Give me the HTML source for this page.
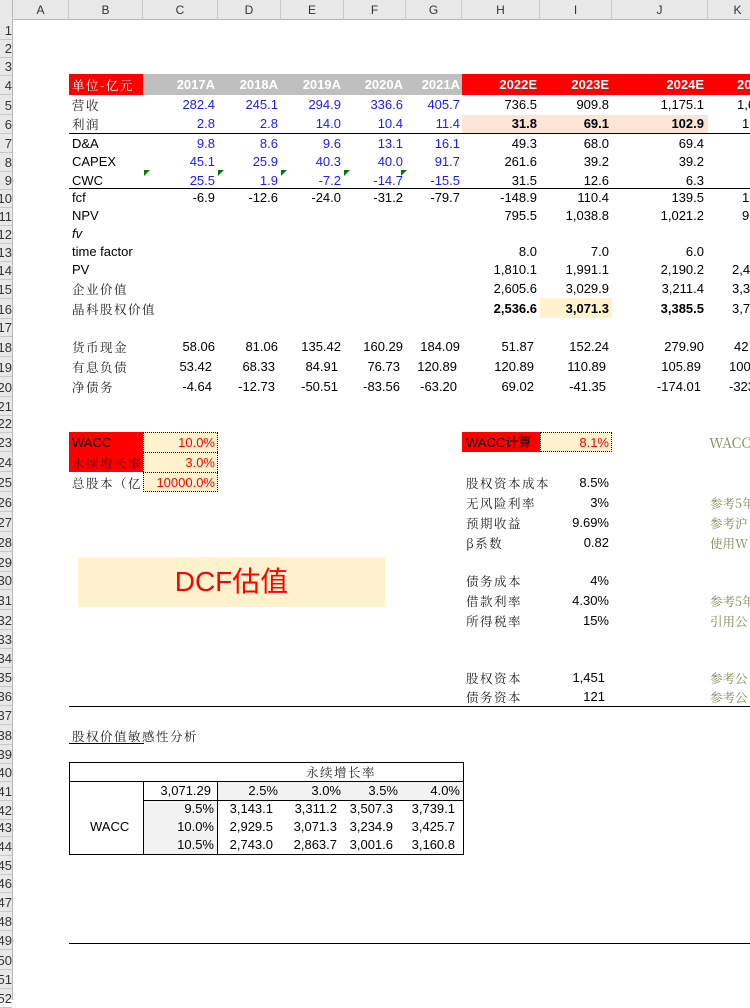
<!DOCTYPE html>
<html><head><meta charset="utf-8"><style>
body{margin:0;width:750px;height:1000px;overflow:hidden;background:#fff;position:relative;font-family:"Liberation Sans","Noto Sans CJK SC",sans-serif;font-size:13px;color:#000}
div{position:absolute;box-sizing:border-box}
.t{height:18px;line-height:18px;white-space:nowrap}
.k{font-family:"Noto Serif CJK SC","Liberation Serif",serif;font-size:12.5px;letter-spacing:1.5px;color:#222}
.b{color:#1a1aff}
.w{color:#fff;font-weight:bold}
.g{color:#7b8a55;font-family:"Noto Serif CJK SC","Liberation Serif",serif;font-size:12.5px}
.red{color:#ff0000}
.ch{top:0;height:20px;line-height:20px;text-align:center;color:#333;font-size:12px;border-right:1px solid #c8c8c8}
.rh{left:0;width:12px;height:19px;font-size:13px;line-height:19px;overflow:hidden;color:#333;border-bottom:1px solid #c8c8c8}
.rh span{position:absolute;right:0;top:0}
.tri{width:0;height:0;border-top:6px solid #007a00;border-right:6px solid transparent}
</style></head><body>
<div style="left:0;top:0;width:750px;height:20px;background:#e8e8e8;border-bottom:1px solid #b8b8b8"></div>
<div style="left:0;top:0;width:13px;height:1000px;background:#e8e8e8;border-right:1px solid #b8b8b8"></div>
<div class="ch" style="left:13px;width:56px">A</div>
<div class="ch" style="left:69px;width:74px">B</div>
<div class="ch" style="left:143px;width:75px">C</div>
<div class="ch" style="left:218px;width:63px">D</div>
<div class="ch" style="left:281px;width:63px">E</div>
<div class="ch" style="left:344px;width:62px">F</div>
<div class="ch" style="left:406px;width:56px">G</div>
<div class="ch" style="left:462px;width:78px">H</div>
<div class="ch" style="left:540px;width:72px">I</div>
<div class="ch" style="left:612px;width:96px">J</div>
<div class="ch" style="left:708px;width:60px">K</div>
<div class="rh" style="top:21px"><span>1</span></div><div class="rh" style="top:39px"><span>2</span></div><div class="rh" style="top:57px"><span>3</span></div><div class="rh" style="top:76px"><span>4</span></div>
<div class="rh" style="top:96px"><span>5</span></div><div class="rh" style="top:115px"><span>6</span></div><div class="rh" style="top:134px"><span>7</span></div><div class="rh" style="top:153px"><span>8</span></div>
<div class="rh" style="top:171px"><span>9</span></div><div class="rh" style="top:189px"><span>10</span></div><div class="rh" style="top:207px"><span>11</span></div><div class="rh" style="top:225px"><span>12</span></div>
<div class="rh" style="top:243px"><span>13</span></div><div class="rh" style="top:261px"><span>14</span></div><div class="rh" style="top:280px"><span>15</span></div><div class="rh" style="top:300px"><span>16</span></div>
<div class="rh" style="top:318px"><span>17</span></div><div class="rh" style="top:338px"><span>18</span></div><div class="rh" style="top:358px"><span>19</span></div><div class="rh" style="top:378px"><span>20</span></div>
<div class="rh" style="top:397px"><span>21</span></div><div class="rh" style="top:414px"><span>22</span></div><div class="rh" style="top:433px"><span>23</span></div><div class="rh" style="top:453px"><span>24</span></div>
<div class="rh" style="top:473px"><span>25</span></div><div class="rh" style="top:493px"><span>26</span></div><div class="rh" style="top:513px"><span>27</span></div><div class="rh" style="top:533px"><span>28</span></div>
<div class="rh" style="top:553px"><span>29</span></div><div class="rh" style="top:571px"><span>30</span></div><div class="rh" style="top:591px"><span>31</span></div><div class="rh" style="top:611px"><span>32</span></div>
<div class="rh" style="top:630px"><span>33</span></div><div class="rh" style="top:649px"><span>34</span></div><div class="rh" style="top:668px"><span>35</span></div><div class="rh" style="top:687px"><span>36</span></div>
<div class="rh" style="top:706px"><span>37</span></div><div class="rh" style="top:726px"><span>38</span></div><div class="rh" style="top:745px"><span>39</span></div><div class="rh" style="top:763px"><span>40</span></div>
<div class="rh" style="top:782px"><span>41</span></div><div class="rh" style="top:801px"><span>42</span></div><div class="rh" style="top:818px"><span>43</span></div><div class="rh" style="top:837px"><span>44</span></div>
<div class="rh" style="top:856px"><span>45</span></div><div class="rh" style="top:874px"><span>46</span></div><div class="rh" style="top:893px"><span>47</span></div><div class="rh" style="top:912px"><span>48</span></div>
<div class="rh" style="top:931px"><span>49</span></div><div class="rh" style="top:951px"><span>50</span></div><div class="rh" style="top:970px"><span>51</span></div><div class="rh" style="top:989px"><span>52</span></div>

<div style="left:69px;top:74px;width:74px;height:21px;background:#ff0000"></div>
<div style="left:143px;top:74px;width:319px;height:21px;background:#bfbfbf"></div>
<div style="left:462px;top:74px;width:288px;height:21px;background:#ff0000"></div>
<div class="t k" style="left:72px;top:76px;color:#fff">单位-亿元</div>
<div class="t w" style="right:535px;top:76px">2017A</div>
<div class="t w" style="right:472px;top:76px">2018A</div>
<div class="t w" style="right:409px;top:76px">2019A</div>
<div class="t w" style="right:347px;top:76px">2020A</div>
<div class="t w" style="right:290px;top:76px">2021A</div>
<div class="t w" style="right:213px;top:76px">2022E</div>
<div class="t w" style="right:141px;top:76px">2023E</div>
<div class="t w" style="right:46px;top:76px">2024E</div>
<div class="t w" style="left:737px;top:76px">2025E</div>

<div style="left:462px;top:115px;width:246px;height:19px;background:#fce4d6"></div>
<div style="left:540px;top:298px;width:72px;height:20px;background:#fff2cc"></div>
<div style="left:69px;top:133px;width:681px;height:1px;background:#000"></div>
<div style="left:69px;top:188px;width:681px;height:1px;background:#000"></div>

<div class="t k" style="left:72px;top:96px">营收</div>
<div class="t k" style="left:72px;top:115px">利润</div>
<div class="t" style="left:72px;top:135px">D&amp;A</div>
<div class="t" style="left:72px;top:153px">CAPEX</div>
<div class="t" style="left:72px;top:172px">CWC</div>
<div class="t" style="left:72px;top:189px">fcf</div>
<div class="t" style="left:72px;top:207px">NPV</div>
<div class="t" style="left:72px;top:225px;font-style:italic">fv</div>
<div class="t" style="left:72px;top:243px">time factor</div>
<div class="t" style="left:72px;top:261px">PV</div>
<div class="t k" style="left:72px;top:280px">企业价值</div>
<div class="t k" style="left:72px;top:300px">晶科股权价值</div>
<div class="t k" style="left:72px;top:338px">货币现金</div>
<div class="t k" style="left:72px;top:358px">有息负债</div>
<div class="t k" style="left:72px;top:378px">净债务</div>

<div class="tri" style="left:144px;top:170px"></div><div class="tri" style="left:218px;top:170px"></div><div class="tri" style="left:281px;top:170px"></div><div class="tri" style="left:344px;top:170px"></div><div class="tri" style="left:401px;top:170px"></div>

<div class="t b" style="right:535px;top:96px">282.4</div><div class="t b" style="right:472px;top:96px">245.1</div><div class="t b" style="right:409px;top:96px">294.9</div><div class="t b" style="right:347px;top:96px">336.6</div><div class="t b" style="right:290px;top:96px">405.7</div>
<div class="t b" style="right:535px;top:115px">2.8</div><div class="t b" style="right:472px;top:115px">2.8</div><div class="t b" style="right:409px;top:115px">14.0</div><div class="t b" style="right:347px;top:115px">10.4</div><div class="t b" style="right:290px;top:115px">11.4</div>
<div class="t b" style="right:535px;top:135px">9.8</div><div class="t b" style="right:472px;top:135px">8.6</div><div class="t b" style="right:409px;top:135px">9.6</div><div class="t b" style="right:347px;top:135px">13.1</div><div class="t b" style="right:290px;top:135px">16.1</div>
<div class="t b" style="right:535px;top:153px">45.1</div><div class="t b" style="right:472px;top:153px">25.9</div><div class="t b" style="right:409px;top:153px">40.3</div><div class="t b" style="right:347px;top:153px">40.0</div><div class="t b" style="right:290px;top:153px">91.7</div>
<div class="t b" style="right:535px;top:172px">25.5</div><div class="t b" style="right:472px;top:172px">1.9</div><div class="t b" style="right:409px;top:172px">-7.2</div><div class="t b" style="right:347px;top:172px">-14.7</div><div class="t b" style="right:290px;top:172px">-15.5</div>
<div class="t" style="right:535px;top:189px">-6.9</div><div class="t" style="right:472px;top:189px">-12.6</div><div class="t" style="right:409px;top:189px">-24.0</div><div class="t" style="right:347px;top:189px">-31.2</div><div class="t" style="right:290px;top:189px">-79.7</div>

<div class="t" style="right:213px;top:96px">736.5</div><div class="t" style="right:141px;top:96px">909.8</div><div class="t" style="right:46px;top:96px">1,175.1</div><div class="t" style="left:737px;top:96px">1,6</div>
<div class="t" style="right:213px;top:115px;font-weight:bold">31.8</div><div class="t" style="right:141px;top:115px;font-weight:bold">69.1</div><div class="t" style="right:46px;top:115px;font-weight:bold">102.9</div><div class="t" style="left:742px;top:115px">1</div>
<div class="t" style="right:213px;top:135px">49.3</div><div class="t" style="right:141px;top:135px">68.0</div><div class="t" style="right:46px;top:135px">69.4</div>
<div class="t" style="right:213px;top:153px">261.6</div><div class="t" style="right:141px;top:153px">39.2</div><div class="t" style="right:46px;top:153px">39.2</div>
<div class="t" style="right:213px;top:172px">31.5</div><div class="t" style="right:141px;top:172px">12.6</div><div class="t" style="right:46px;top:172px">6.3</div>
<div class="t" style="right:213px;top:189px">-148.9</div><div class="t" style="right:141px;top:189px">110.4</div><div class="t" style="right:46px;top:189px">139.5</div><div class="t" style="left:742px;top:189px">1</div>
<div class="t" style="right:213px;top:207px">795.5</div><div class="t" style="right:141px;top:207px">1,038.8</div><div class="t" style="right:46px;top:207px">1,021.2</div><div class="t" style="left:742px;top:207px">9</div>
<div class="t" style="right:213px;top:243px">8.0</div><div class="t" style="right:141px;top:243px">7.0</div><div class="t" style="right:46px;top:243px">6.0</div>
<div class="t" style="right:213px;top:261px">1,810.1</div><div class="t" style="right:141px;top:261px">1,991.1</div><div class="t" style="right:46px;top:261px">2,190.2</div><div class="t" style="left:732px;top:261px">2,4</div>
<div class="t" style="right:213px;top:280px">2,605.6</div><div class="t" style="right:141px;top:280px">3,029.9</div><div class="t" style="right:46px;top:280px">3,211.4</div><div class="t" style="left:732px;top:280px">3,3</div>
<div class="t" style="right:213px;top:300px;font-weight:bold">2,536.6</div><div class="t" style="right:141px;top:300px;font-weight:bold">3,071.3</div><div class="t" style="right:46px;top:300px;font-weight:bold">3,385.5</div><div class="t" style="left:732px;top:300px">3,7</div>

<div class="t" style="right:535px;top:338px">58.06</div><div class="t" style="right:472px;top:338px">81.06</div><div class="t" style="right:409px;top:338px">135.42</div><div class="t" style="right:347px;top:338px">160.29</div><div class="t" style="right:290px;top:338px">184.09</div><div class="t" style="right:216px;top:338px">51.87</div><div class="t" style="right:141px;top:338px">152.24</div><div class="t" style="right:46px;top:338px">279.90</div><div class="t" style="left:734px;top:338px">42</div>
<div class="t" style="right:538px;top:358px">53.42</div><div class="t" style="right:475px;top:358px">68.33</div><div class="t" style="right:412px;top:358px">84.91</div><div class="t" style="right:350px;top:358px">76.73</div><div class="t" style="right:293px;top:358px">120.89</div><div class="t" style="right:216px;top:358px">120.89</div><div class="t" style="right:144px;top:358px">110.89</div><div class="t" style="right:49px;top:358px">105.89</div><div class="t" style="left:729px;top:358px">100</div>
<div class="t" style="right:538px;top:378px">-4.64</div><div class="t" style="right:475px;top:378px">-12.73</div><div class="t" style="right:412px;top:378px">-50.51</div><div class="t" style="right:350px;top:378px">-83.56</div><div class="t" style="right:293px;top:378px">-63.20</div><div class="t" style="right:216px;top:378px">69.02</div><div class="t" style="right:144px;top:378px">-41.35</div><div class="t" style="right:49px;top:378px">-174.01</div><div class="t" style="left:729px;top:378px">-323</div>

<div style="left:69px;top:432px;width:74px;height:40px;background:#ff0000"></div>
<div style="left:143px;top:432px;width:75px;height:60px;background:#fff2cc;border:1px dotted #000"></div>
<div style="left:143px;top:452px;width:75px;height:1px;border-top:1px dotted #000"></div>
<div style="left:143px;top:472px;width:75px;height:1px;border-top:1px dotted #000"></div>
<div class="t" style="left:72px;top:434px">WACC</div>
<div class="t k" style="left:72px;top:454px;color:#600">永续增长率</div>
<div class="t k" style="left:72px;top:474px">总股本（亿</div>
<div class="t red" style="right:535px;top:434px">10.0%</div>
<div class="t red" style="right:535px;top:454px">3.0%</div>
<div class="t red" style="right:535px;top:474px">10000.0%</div>

<div style="left:78px;top:557px;width:307px;height:50px;background:#fff2cc;color:#ff0000;font-size:28px;line-height:50px;text-align:center;font-family:'Liberation Sans','Noto Sans CJK SC',sans-serif">DCF估值</div>

<div style="left:462px;top:432px;width:78px;height:20px;background:#ff0000"></div>
<div style="left:540px;top:432px;width:72px;height:20px;background:#fff2cc;border:1px dotted #000"></div>
<div class="t" style="left:466px;top:434px">WACC计算</div>
<div class="t red" style="right:141px;top:434px">8.1%</div>
<div class="t g" style="left:709px;top:434px;font-size:14px">WACC</div>

<div class="t k" style="left:466px;top:474px">股权资本成本</div><div class="t" style="right:141px;top:474px;background:#fff;padding-left:3px">8.5%</div>
<div class="t k" style="left:466px;top:494px">无风险利率</div><div class="t" style="right:141px;top:494px">3%</div><div class="t g" style="left:710px;top:494px">参考5年</div>
<div class="t k" style="left:466px;top:514px">预期收益</div><div class="t" style="right:141px;top:514px">9.69%</div><div class="t g" style="left:710px;top:514px">参考沪</div>
<div class="t k" style="left:466px;top:534px">β系数</div><div class="t" style="right:141px;top:534px">0.82</div><div class="t g" style="left:710px;top:534px">使用W</div>
<div class="t k" style="left:466px;top:572px">债务成本</div><div class="t" style="right:141px;top:572px">4%</div>
<div class="t k" style="left:466px;top:592px">借款利率</div><div class="t" style="right:141px;top:592px">4.30%</div><div class="t g" style="left:710px;top:592px">参考5年</div>
<div class="t k" style="left:466px;top:612px">所得税率</div><div class="t" style="right:141px;top:612px">15%</div><div class="t g" style="left:710px;top:612px">引用公</div>
<div class="t k" style="left:466px;top:669px">股权资本</div><div class="t" style="right:145px;top:669px">1,451</div><div class="t g" style="left:710px;top:669px">参考公</div>
<div class="t k" style="left:466px;top:688px">债务资本</div><div class="t" style="right:145px;top:688px">121</div><div class="t g" style="left:710px;top:688px">参考公</div>
<div style="left:69px;top:706px;width:681px;height:1px;background:#000"></div>

<div class="t k" style="left:72px;top:727px">股权价值敏感性分析</div>
<div style="left:69px;top:743px;width:75px;height:1px;background:#000"></div>
<div style="left:217px;top:782px;width:246px;height:18px;background:#f2f2f2"></div>
<div style="left:143px;top:800px;width:74px;height:54px;background:#f2f2f2"></div>
<div style="left:69px;top:762px;width:395px;height:93px;border:1px solid #000"></div>
<div style="left:69px;top:781px;width:395px;height:1px;background:#000"></div>
<div style="left:143px;top:800px;width:321px;height:1px;background:#000"></div>
<div style="left:143px;top:781px;width:1px;height:73px;background:#000"></div>
<div style="left:217px;top:781px;width:1px;height:73px;background:#000"></div>
<div class="t k" style="left:306px;top:763px">永续增长率</div>
<div class="t" style="left:90px;top:818px">WACC</div>
<div class="t" style="right:539px;top:782px">3,071.29</div>
<div class="t" style="right:472px;top:782px">2.5%</div><div class="t" style="right:409px;top:782px">3.0%</div><div class="t" style="right:352px;top:782px">3.5%</div><div class="t" style="right:290px;top:782px">4.0%</div>
<div class="t" style="right:536px;top:800px">9.5%</div><div class="t" style="right:477px;top:800px">3,143.1</div><div class="t" style="right:413px;top:800px">3,311.2</div><div class="t" style="right:357px;top:800px">3,507.3</div><div class="t" style="right:295px;top:800px">3,739.1</div>
<div class="t" style="right:536px;top:818px">10.0%</div><div class="t" style="right:477px;top:818px">2,929.5</div><div class="t" style="right:413px;top:818px">3,071.3</div><div class="t" style="right:357px;top:818px">3,234.9</div><div class="t" style="right:295px;top:818px">3,425.7</div>
<div class="t" style="right:536px;top:836px">10.5%</div><div class="t" style="right:477px;top:836px">2,743.0</div><div class="t" style="right:413px;top:836px">2,863.7</div><div class="t" style="right:357px;top:836px">3,001.6</div><div class="t" style="right:295px;top:836px">3,160.8</div>
<div style="left:69px;top:943px;width:681px;height:1px;background:#000"></div>
</body></html>
